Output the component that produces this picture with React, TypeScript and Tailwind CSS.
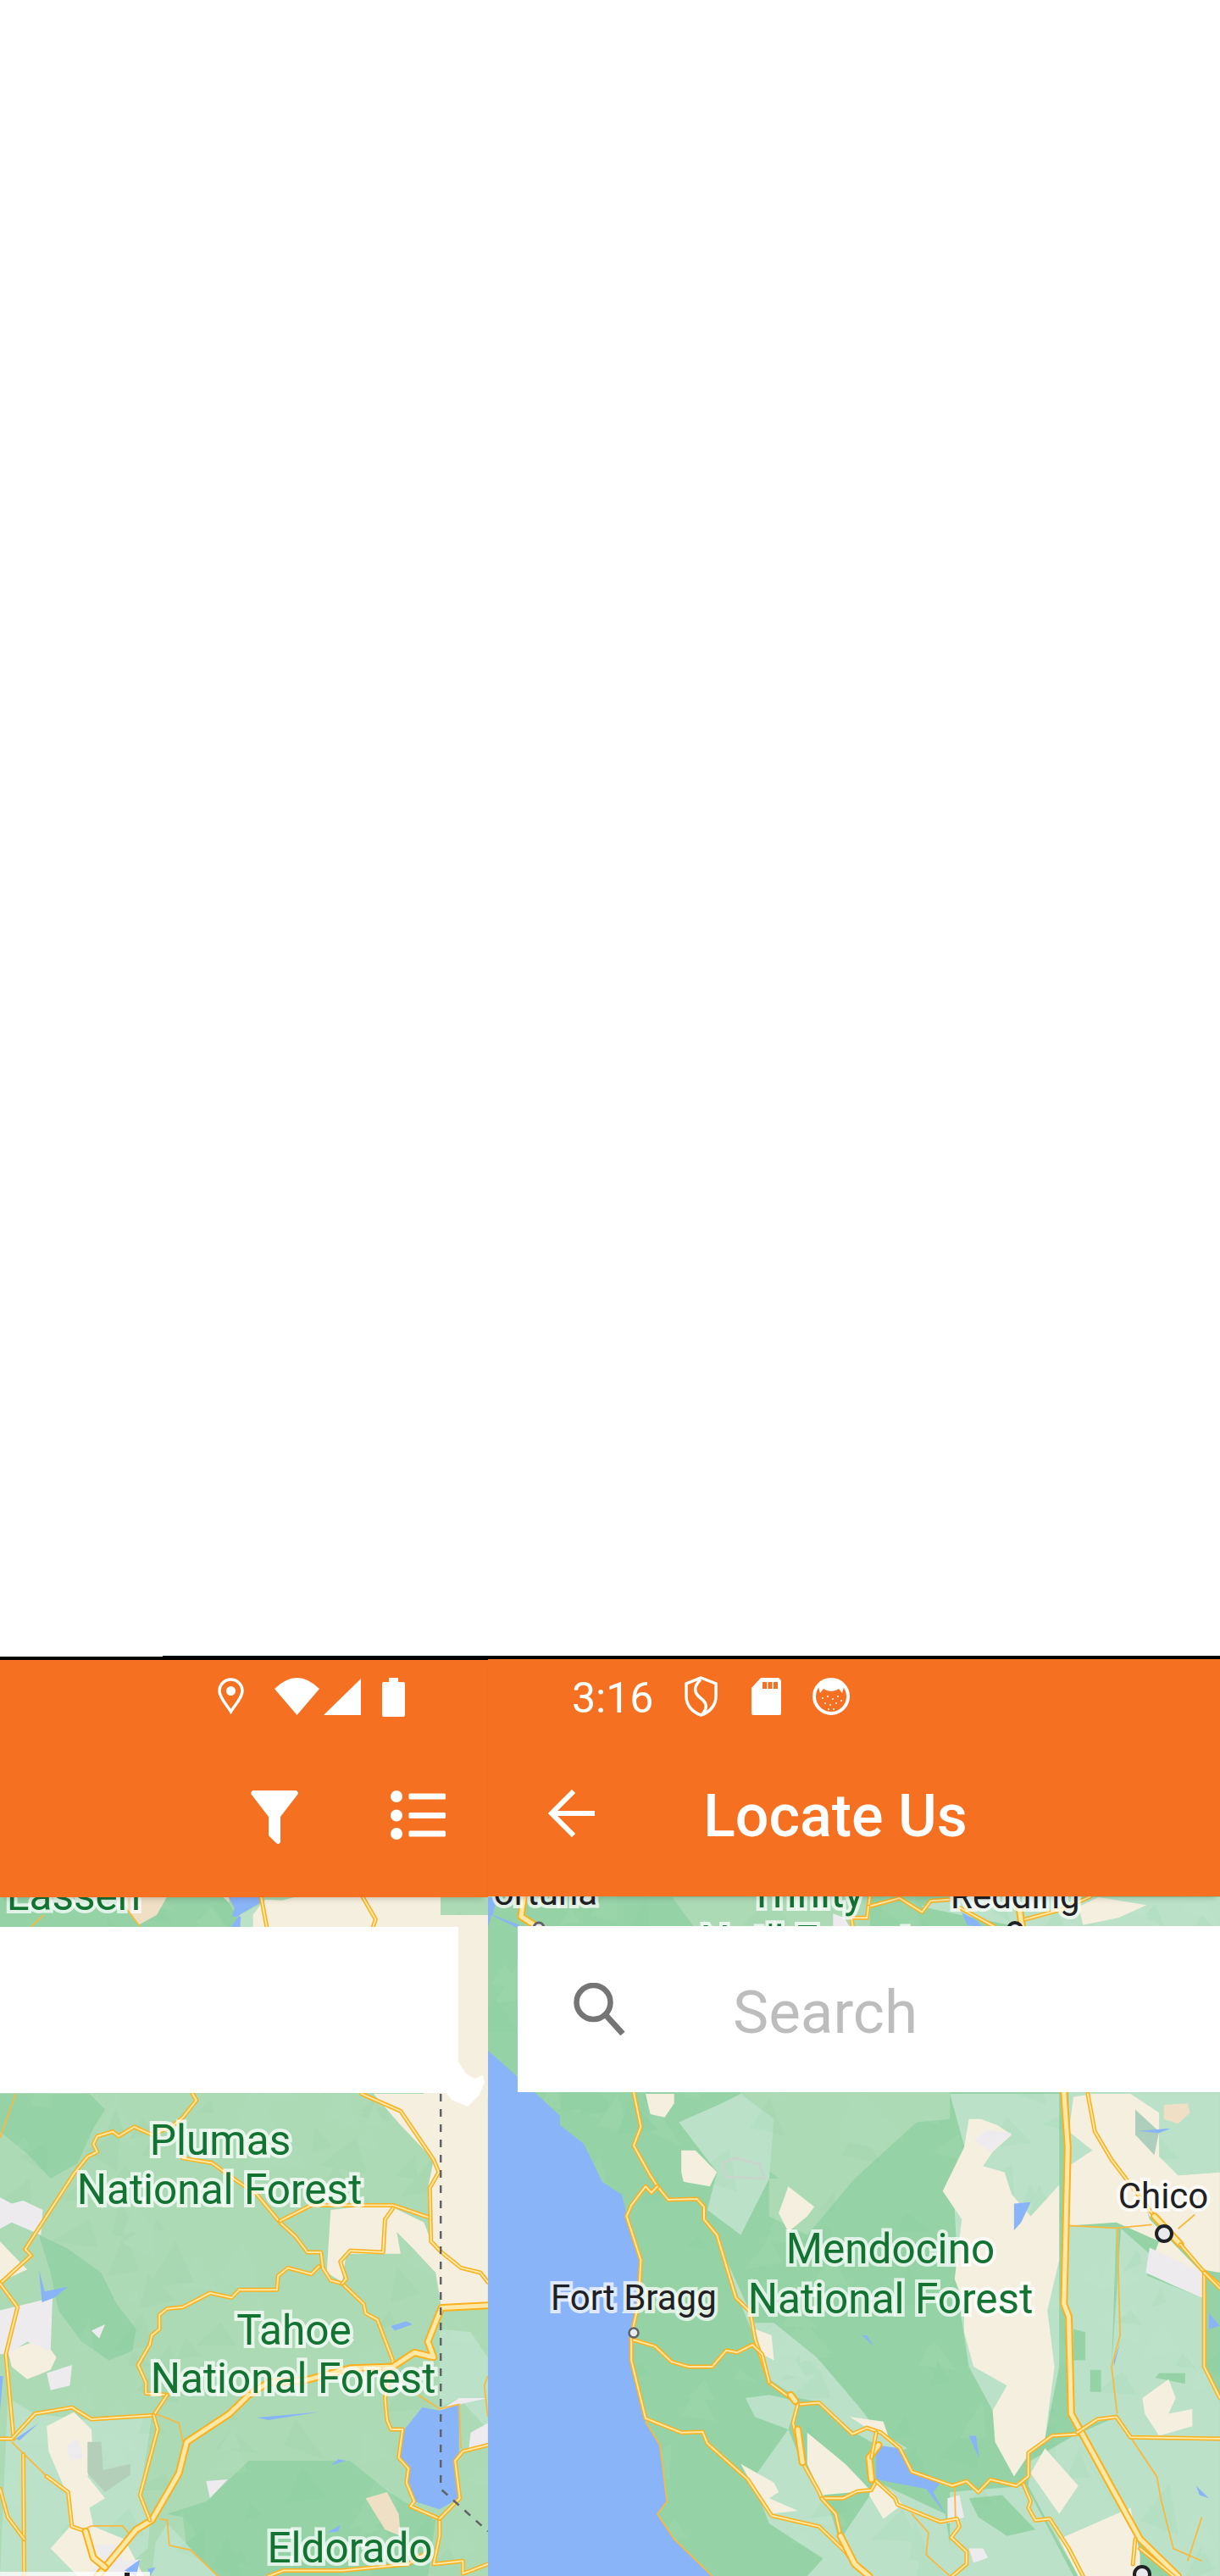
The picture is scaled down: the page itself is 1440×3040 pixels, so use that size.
import React from 'react';

// the reference crops were read at different scales, so map shapes are noted in crop coordinates
const conv = (ox: number, oy: number, sx: number, sy: number) => (flat: number[]) => {
  const out: string[] = [];
  for (let i = 0; i < flat.length; i += 2) out.push(`${(ox + flat[i] / sx).toFixed(1)},${(oy + flat[i + 1] / sy).toFixed(1)}`);
  return out.join(' ');
};
const L = conv(0, 2460, 2.178, 2.703);
const R = conv(560, 2460, 1.782, 2.703);
const T = conv(0, 2230, 3, 3);
const B = conv(0, 2960, 3, 3);
const TR = conv(920, 2230, 3, 3);
const TM = conv(500, 2230, 3, 3);

const DARK = '#95D3A6';
const MID = '#ACDAB5';
const LIGHT = '#BBE2C8';
const CREAM = '#F5EFDF';
const WATER = '#8AB4F8';
const GRAY = '#EEEBEF';
const PEACH = '#EFDFC4';

const Facets: React.FC<{ x: number; y: number; w: number; h: number; seed: number }> = ({ x, y, w, h, seed }) => {
  let s = seed;
  const rnd = () => {
    s = (s * 16807) % 2147483647;
    return s / 2147483647;
  };
  const items = Array.from({ length: 170 }, () => {
    const cx = x + rnd() * w;
    const cy = y + rnd() * h;
    const size = 10 + rnd() * 24;
    const pts = [0, 1, 2].map((i) => {
      const a = i * 2.1 + rnd() * 1.2;
      return `${(cx + Math.cos(a) * size).toFixed(1)},${(cy + Math.sin(a) * size).toFixed(1)}`;
    });
    return { pts: pts.join(' '), fill: rnd() > 0.5 ? '#7CC797' : '#CBE9D4' };
  });
  return (
    <g opacity={0.09}>
      {items.map((f, i) => (
        <polygon key={i} points={f.pts} fill={f.fill} />
      ))}
    </g>
  );
};

const Road: React.FC<{ d: string; thick?: boolean }> = ({ d, thick }) => (
  <g fill="none" strokeLinejoin="round" strokeLinecap="round">
    <polyline points={d} stroke="#FBB01E" strokeWidth={thick ? 9 : 5} />
    <polyline points={d} stroke="#FEE8A6" strokeWidth={thick ? 5 : 2} />
  </g>
);

const Thin: React.FC<{ d: string }> = ({ d }) => (
  <polyline points={d} fill="none" stroke="#F9B93F" strokeWidth={1.8} />
);

const Label: React.FC<{ x: number; y: number; size?: number; dark?: boolean; anchor?: 'start' | 'middle' | 'end'; children: React.ReactNode }> = ({
  x,
  y,
  size = 49.5,
  dark,
  anchor = 'middle',
  children,
}) => (
  <text
    x={x}
    y={y}
    textAnchor={anchor}
    fontSize={size}
    fill={dark ? '#202124' : '#137333'}
    stroke="#FFFFFF"
    strokeOpacity={0.72}
    strokeWidth={8}
    strokeLinejoin="miter"
    className="[paint-order:stroke] font-[family-name:Roboto,sans-serif]"
  >
    {children}
  </text>
);

const LeftMap = () => (
  <svg viewBox="0 2239 576 801" className="block h-full w-full" preserveAspectRatio="none">
    <rect x="0" y="2239" width="576" height="801" fill={MID} />
    <polygon points={T([0, 27, 800, 27, 860, 135, 0, 135])} fill={DARK} />
    <polygon points={L([0, 30, 230, 30, 270, 80, 240, 140, 200, 250, 130, 300, 70, 220, 0, 150])} fill={DARK} />
    <polygon points={L([100, 480, 170, 520, 260, 600, 300, 700, 350, 780, 340, 850, 280, 880, 210, 820, 150, 720, 130, 600])} fill={DARK} />
    <polygon points={L([430, 1370, 530, 1330, 640, 1200, 900, 1200, 1000, 1300, 1120, 1390, 1100, 1568, 560, 1568, 480, 1480, 470, 1380])} fill={DARK} />
    <polygon points={L([20, 1000, 90, 1050, 230, 1070, 390, 1060, 360, 1310, 385, 1400, 380, 1480, 300, 1568, 0, 1568])} fill={LIGHT} />
    <polygon points={L([430, 1400, 490, 1480, 560, 1568, 390, 1568, 400, 1460])} fill={LIGHT} />
    <polygon points={L([1130, 780, 1210, 790, 1254, 870, 1254, 1100, 1180, 1000, 1130, 1030])} fill={LIGHT} />
    <Facets x={0} y={2239} w={576} h={801} seed={4711} />

    <polygon points={L([960, 30, 1254, 30, 1254, 700, 1135, 712, 1120, 600, 1060, 520, 1020, 470, 1030, 540, 890, 540, 880, 630, 840, 600, 850, 400, 990, 380, 1090, 440, 1108, 500, 1100, 330, 1115, 240, 1030, 130])} fill={CREAM} />
    <polygon points={T([895, 135, 895, 90, 925, 50, 940, 35, 1000, 38, 1040, 27, 1560, 27, 1560, 140])} fill={CREAM} />
    <rect x="500" y="2260" width="76" height="215" fill={CREAM} />
    <polygon points={T([925, 50, 850, 90, 850, 135, 895, 135, 895, 90])} fill={LIGHT} />
    <polygon points={T([430, 27, 590, 27, 555, 90, 490, 125, 450, 70])} fill={PEACH} />
    <polygon points={T([790, 27, 810, 27, 812, 47])} fill={PEACH} />
    <polygon points={L([0, 500, 30, 540, 70, 590, 0, 630])} fill={CREAM} />
    <polygon points={L([20, 850, 110, 810, 145, 870, 130, 910, 70, 940, 30, 900])} fill={CREAM} />
    <polygon points={L([120, 1090, 190, 1045, 235, 1100, 240, 1210, 225, 1250, 270, 1320, 230, 1350, 240, 1410, 320, 1450, 370, 1568, 200, 1568, 130, 1480, 180, 1410, 170, 1300, 125, 1170])} fill={CREAM} />
    <polygon points={L([940, 1320, 995, 1300, 1025, 1370, 1030, 1440, 990, 1420])} fill={PEACH} />

    <polygon points={L([0, 360, 30, 380, 60, 370, 110, 400, 105, 480, 30, 440, 0, 460])} fill={GRAY} />
    <polygon points={L([0, 720, 135, 680, 130, 850, 70, 820, 20, 860, 0, 860])} fill={GRAY} />
    <polygon points={L([235, 785, 270, 765, 255, 810])} fill={GRAY} />
    <polygon points={L([120, 920, 185, 895, 180, 960, 130, 975])} fill={GRAY} />
    <polygon points={L([530, 1265, 585, 1260, 540, 1320])} fill={GRAY} />
    <polygon points={L([1254, 1080, 1210, 1110, 1205, 1160, 1254, 1150])} fill={GRAY} />
    <polygon points={L([1130, 1040, 1180, 1000, 1254, 1000, 1180, 1020])} fill={GRAY} />
    <polygon points={L([170, 1150, 200, 1130, 215, 1190, 180, 1200])} fill={GRAY} />
    <polygon points={B([330, 130, 430, 130, 435, 190, 500, 180, 440, 240, 290, 240, 370, 190])} fill={GRAY} />
    <polygon points={L([225, 1140, 260, 1140, 265, 1230, 335, 1210, 335, 1245, 270, 1300, 225, 1240])} fill="#B3CFB9" />

    <polygon points={L([1040, 1100, 1085, 1030, 1130, 1040, 1180, 1020, 1180, 1190, 1170, 1200, 1180, 1320, 1130, 1355, 1065, 1330, 1045, 1270, 1050, 1225, 1025, 1190])} fill={WATER} />
    <polygon points={L([100, 590, 115, 660, 175, 645, 140, 680, 108, 695])} fill={WATER} />
    <polygon points={L([1005, 770, 1045, 755, 1060, 765, 1015, 785])} fill={WATER} />
    <polygon points={L([660, 1062, 820, 1045, 690, 1070])} fill={WATER} />
    <polygon points={L([850, 1215, 870, 1195, 890, 1200])} fill={WATER} />
    <polygon points={L([40, 1130, 100, 1080, 50, 1135])} fill={WATER} />
    <polygon points={L([840, 1430, 875, 1405, 870, 1425])} fill={WATER} />
    <polygon points={L([0, 930, 8, 930, 0, 1040])} fill={WATER} />
    <polygon points={L([320, 1550, 360, 1515, 350, 1568])} fill={WATER} />
    <polygon points={L([380, 1545, 400, 1540, 385, 1568])} fill={WATER} />
    <polygon points={T([810, 27, 925, 27, 925, 45, 850, 88, 815, 135, 850, 135, 853, 95, 822, 95, 830, 65])} fill={WATER} />

    <Thin d={L([40, 30, 0, 170])} />
    <Thin d={T([155, 90, 110, 130])} />
    <Thin d={T([450, 70, 495, 130])} />
    <Thin d={L([400, 1050, 460, 1080, 470, 1140])} />
    <Thin d={L([1075, 990, 1130, 1035, 1180, 1020, 1185, 1160])} />
    <Thin d={L([410, 1385, 430, 1390, 435, 1470, 490, 1485, 560, 1568])} />
    <Thin d={L([215, 1420, 235, 1408, 315, 1408, 330, 1430, 355, 1425])} />
    <Thin d={L([1254, 930, 1245, 960, 1254, 1060])} />
    <Thin d={L([30, 1140, 120, 1250])} />
    <Road d={T([925, 27, 945, 135])} />
    <Road d={T([1285, 27, 1330, 105, 1320, 135])} />
    <Road d={L([495, 30, 505, 50, 470, 105, 440, 135, 390, 160, 345, 135, 305, 165, 290, 150, 250, 165, 240, 190, 250, 215, 225, 230, 190, 285, 65, 525, 80, 545, 0, 635])} />
    <Road d={L([0, 635, 45, 710, 15, 860, 35, 1130])} />
    <Road d={L([470, 235, 545, 250, 600, 300, 660, 350, 720, 440, 760, 485, 790, 535, 825, 535, 830, 585, 850, 625, 880, 635, 935, 700, 940, 730, 970, 750, 1010, 880, 990, 1000, 995, 1070, 1005, 1100, 1035, 1100, 1025, 1190, 1050, 1225, 1045, 1270, 1065, 1330, 1055, 1345, 1130, 1385, 1130, 1440, 1115, 1530, 1190, 1520, 1190, 1560, 1254, 1530])} />
    <Road d={L([720, 435, 800, 385, 1010, 385, 1105, 425])} />
    <Road d={L([930, 30, 1030, 85, 1115, 240, 1128, 280, 1105, 330, 1108, 500, 1135, 535, 1185, 585, 1235, 600, 1254, 630])} />
    <Road d={L([1010, 395, 990, 430, 985, 535, 900, 530, 875, 565, 890, 620, 880, 635])} />
    <Road d={L([820, 580, 800, 605, 740, 585, 715, 610, 712, 655, 615, 655, 595, 680, 540, 665, 470, 710, 430, 715, 410, 735, 410, 780, 390, 800, 385, 830, 355, 895, 375, 950, 375, 985, 430, 990])} />
    <Road thick d={L([1254, 705, 1135, 712, 1100, 820, 1115, 870, 1065, 855, 1010, 900, 900, 905, 780, 945, 690, 950, 640, 990])} />
    <Road thick d={L([640, 990, 590, 1050, 480, 1140, 460, 1240, 390, 1390, 350, 1420, 270, 1540, 250, 1568])} />
    <Road d={L([430, 990, 395, 1055, 235, 1068, 185, 1030, 90, 1050, 30, 1130, 0, 1130])} />
    <Road d={L([395, 1055, 405, 1100, 360, 1310, 385, 1390])} />
    <Road d={L([120, 1250, 175, 1300, 185, 1410, 220, 1425])} />
    <Road thick d={L([220, 1425, 240, 1510, 270, 1540])} />
    <Road d={L([60, 1180, 62, 1568])} />
    <Road d={L([0, 1290, 20, 1380, 62, 1450])} />
    <Road d={L([1254, 1150, 1190, 1170, 1170, 1200, 1182, 1320, 1130, 1385])} />
    <Road d={L([690, 1568, 730, 1550, 880, 1550, 1050, 1530, 1100, 1490])} />

    <polyline points={L([1133, 30, 1133, 1290, 1254, 1425])} fill="none" stroke="#5F6368" strokeWidth={2.5} strokeDasharray="9 9" />
    <polygon points="541,2433 550,2447 560,2453 570,2449 572,2458 565,2473 552,2486 533,2478 527,2470 541,2440" fill="#FFFFFF" />

    <rect x="0" y="3035" width="177" height="5" fill="#FFFFFF" fillOpacity={0.75} />
    <rect x="147" y="3036" width="6" height="4" fill="#202124" />

    <Label x={87} y={2254}>Lassen</Label>
    <Label x={260} y={2543}>Plumas</Label>
    <Label x={259} y={2601}>National Forest</Label>
    <Label x={347} y={2767}>Tahoe</Label>
    <Label x={346} y={2824}>National Forest</Label>
    <Label x={413} y={3024}>Eldorado</Label>
  </svg>
);

const RightMap = () => (
  <svg viewBox="576 2238 864 802" className="block h-full w-full" preserveAspectRatio="none">
    <rect x="576" y="2238" width="864" height="802" fill={DARK} />
    <polygon points={TM([880, 27, 1560, 27, 1560, 135, 960, 135])} fill={MID} />
    <polygon points={TR([0, 27, 320, 27, 320, 135, 0, 135])} fill={MID} />
    <polygon points={TR([500, 60, 600, 27, 1560, 27, 1560, 135, 860, 135])} fill={LIGHT} />
    <polygon points={R([560, 25, 1000, 25, 1000, 110, 930, 120, 800, 300, 640, 300, 520, 150])} fill={MID} />
    <polygon points={R([430, 120, 520, 60, 560, 30, 630, 110, 620, 300, 560, 480, 490, 400, 510, 280])} fill={LIGHT} />
    <polygon points={R([620, 300, 800, 300, 700, 480, 620, 420])} fill={MID} />
    <polygon points={R([630, 760, 720, 870, 810, 1030, 845, 1100, 910, 1160, 880, 1180, 800, 1110, 720, 1010, 680, 1000, 620, 940, 590, 810])} fill={LIGHT} />
    <polygon points={R([530, 560, 590, 760, 630, 760, 590, 810, 560, 700])} fill={LIGHT} />
    <polygon points={R([1040, 250, 1230, 250, 1230, 900, 1200, 1130, 1100, 1130, 1090, 1040, 1040, 900, 1020, 700, 1010, 400])} fill={LIGHT} />
    <polygon points={R([1000, 30, 1230, 30, 1230, 260, 1040, 250])} fill={LIGHT} />
    <polygon points={R([1250, 25, 1568, 25, 1568, 280, 1480, 290, 1250, 450])} fill={LIGHT} />
    <polygon points={R([1250, 450, 1350, 460, 1340, 900, 1350, 1060, 1280, 1090, 1260, 1060, 1240, 710])} fill={LIGHT} />
    <polygon points={R([1360, 460, 1420, 540, 1415, 610, 1530, 680, 1530, 900, 1568, 1000, 1568, 1568, 1480, 1568, 1390, 1450, 1260, 1120, 1350, 1060, 1340, 900])} fill={LIGHT} />
    <polygon points={R([1170, 1200, 1260, 1120, 1390, 1450, 1390, 1568, 1270, 1568, 1200, 1380, 1165, 1280])} fill={LIGHT} />
    <polygon points={R([570, 1000, 620, 990, 680, 1010, 660, 1100, 690, 1210, 740, 1320, 790, 1568, 620, 1400, 585, 1260, 660, 1100, 590, 1060])} fill={LIGHT} />
    <polygon points={R([850, 1270, 990, 1370, 1010, 1568, 700, 1568, 770, 1450])} fill={LIGHT} />
    <polygon points={R([1000, 1300, 1160, 1280, 1260, 1568, 1000, 1568])} fill={LIGHT} />
    <polygon points={R([1040, 1320, 1110, 1310, 1180, 1420, 1120, 1440, 1060, 1380])} fill={DARK} />
    <polygon points={R([1260, 780, 1285, 790, 1285, 880, 1260, 880])} fill={DARK} />
    <polygon points={R([1295, 910, 1318, 910, 1318, 980, 1295, 980])} fill={DARK} />
    <polygon points={R([1440, 920, 1495, 920, 1495, 955, 1432, 935])} fill={DARK} />
    <Facets x={576} y={2238} w={864} h={802} seed={90210} />

    <polygon points={R([1040, 110, 1065, 110, 1100, 130, 1130, 160, 1090, 215, 1070, 260, 1115, 280, 1130, 350, 1170, 420, 1230, 320, 1230, 560, 1205, 720, 1220, 900, 1200, 1130, 1170, 1170, 1135, 1250, 1095, 1140, 1090, 1040, 1120, 960, 1050, 900, 1030, 790, 1030, 700, 1010, 620, 1025, 430, 985, 340, 1030, 200])} fill={CREAM} />
    <polygon points={R([1260, 40, 1300, 30, 1340, 130, 1390, 280, 1420, 430, 1530, 600, 1530, 680, 1470, 640, 1415, 600, 1440, 500, 1350, 440, 1250, 450, 1250, 260, 1300, 210, 1250, 150])} fill={CREAM} />
    <polygon points={R([1300, 30, 1380, 30, 1440, 90, 1440, 230, 1480, 290, 1568, 280, 1568, 600, 1530, 590, 1420, 420])} fill={CREAM} />
    <polygon points={R([1405, 1000, 1460, 940, 1475, 1000, 1460, 1050, 1510, 1035, 1510, 1090, 1440, 1120, 1410, 1050])} fill={CREAM} />
    <polygon points={R([360, 30, 420, 30, 420, 60, 400, 105, 370, 95])} fill={CREAM} />
    <polygon points={R([435, 210, 465, 210, 510, 280, 495, 325, 440, 310, 435, 280])} fill={CREAM} />
    <polygon points={R([660, 325, 715, 390, 700, 420, 660, 470, 640, 410])} fill={CREAM} />
    <polygon points={R([700, 1110, 780, 1210, 830, 1290, 800, 1300, 730, 1310, 700, 1210])} fill={CREAM} />
    <polygon points={R([560, 1210, 630, 1270, 640, 1300, 620, 1320, 680, 1360, 620, 1370, 585, 1280])} fill={CREAM} />
    <polygon points={R([840, 1270, 880, 1300, 900, 1340, 860, 1385, 830, 1310])} fill={CREAM} />
    <polygon points={R([790, 1060, 860, 1075, 870, 1120, 820, 1090])} fill={CREAM} />
    <polygon points={R([1200, 1160, 1270, 1280, 1230, 1370, 1170, 1240])} fill={CREAM} />
    <polygon points={R([1230, 1450, 1380, 1350, 1400, 1500, 1400, 1568, 1270, 1568])} fill={CREAM} />
    <polygon points={R([590, 780, 625, 800, 630, 880, 605, 860])} fill={CREAM} />
    <polygon points={TR([1075, 125, 1060, 60, 1130, 27, 1300, 55, 1200, 100])} fill={CREAM} />
    <polygon points={R([1450, 65, 1500, 60, 1505, 90, 1480, 125, 1450, 110])} fill={PEACH} />
    <polygon points={R([1390, 80, 1440, 150, 1430, 225, 1390, 160])} fill="#AECFBB" />

    <polygon points={R([1050, 175, 1080, 145, 1130, 155, 1085, 215])} fill={GRAY} />
    <polygon points={R([1412, 600, 1420, 520, 1530, 600, 1530, 680, 1470, 640])} fill={GRAY} />
    <polygon points={R([995, 1320, 1020, 1310, 1030, 1380, 995, 1400])} fill={GRAY} />
    <polygon points={R([1040, 1480, 1070, 1480, 1080, 1510, 1050, 1525])} fill={GRAY} />
    <polygon points={TR([190, 85, 230, 100, 250, 135, 190, 135])} fill={GRAY} />
    <polyline points={R([520, 250, 550, 235, 600, 255, 610, 300, 530, 295, 520, 250])} fill="none" stroke="#C8D5CB" strokeWidth={3} />

    <polygon points="576,2420 611,2451 633,2471 661,2497 661,2508 689,2530 711,2575 734,2590 740,2615 756,2667 754,2719 745,2756 745,2785 759,2852 779,2885 787,2952 776,2967 796,2996 840,3040 576,3040" fill={WATER} />
    <polygon points={TM([228, 27, 260, 27, 245, 90, 340, 125, 330, 135, 240, 90, 228, 135])} fill={WATER} />
    <polygon points={R([845, 1150, 895, 1160, 920, 1240, 980, 1270, 965, 1300, 990, 1370, 950, 1290, 845, 1260])} fill={WATER} />
    <polygon points={R([1135, 380, 1170, 375, 1150, 440, 1135, 465])} fill={WATER} />
    <polygon points={R([815, 800, 825, 800, 840, 835])} fill={WATER} />
    <polygon points={R([1040, 1120, 1055, 1120, 1062, 1195])} fill={WATER} />
    <polygon points={R([1395, 148, 1465, 140, 1440, 155])} fill={WATER} />
    <polygon points={R([1545, 730, 1568, 770, 1545, 780])} fill={WATER} />
    <polygon points={R([1358, 825, 1345, 900, 1345, 880])} fill={WATER} />
    <polygon points={R([1518, 1280, 1545, 1320, 1525, 1310])} fill={WATER} />
    <polygon points={TR([645, 80, 700, 110, 720, 135, 665, 125])} fill={WATER} />

    <Thin d={R([1250, 450, 1350, 458, 1425, 447])} />
    <Thin d={R([1352, 460, 1358, 800, 1340, 900, 1352, 1050])} />
    <Thin d={R([1480, 460, 1515, 415])} />
    <Thin d={R([1380, 1125, 1435, 1250, 1445, 1330, 1470, 1480, 1530, 1520])} />
    <Thin d={R([1530, 1380, 1500, 1520])} />
    <Thin d={R([1010, 1280, 1012, 1390])} />
    <Thin d={R([920, 1370, 955, 1430, 950, 1500, 1000, 1568])} />
    <Thin d={R([360, 1075, 390, 1150, 405, 1330, 385, 1370, 420, 1450, 500, 1568])} />

    <Road d={R([335, 25, 350, 135, 335, 195, 370, 290, 385, 325, 408, 368, 468, 365, 483, 390, 483, 430, 510, 480, 550, 680, 580, 725, 590, 810, 620, 950, 665, 1000, 680, 1020, 725, 1015, 795, 1115, 825, 1095, 855, 1110, 895, 1160, 920, 1235, 1005, 1280, 1035, 1265, 1060, 1300, 1085, 1260, 1140, 1280, 1165, 1250, 1165, 1175, 1215, 1120, 1268, 1115])} />
    <Road d={R([385, 325, 372, 345, 360, 325, 330, 385, 320, 420, 350, 560, 345, 700, 330, 800, 330, 880, 360, 1065, 435, 1110, 480, 1108, 490, 1145, 575, 1260, 625, 1375, 725, 1410, 780, 1490, 800, 1530, 830, 1568])} />
    <Road d={R([335, 815, 380, 835, 415, 885, 450, 900, 500, 900, 530, 848, 552, 855, 585, 830, 605, 860, 620, 950])} />
    <Road thick d={R([1240, 25, 1248, 200, 1240, 700, 1250, 740, 1255, 1050, 1400, 1450, 1480, 1568])} />
    <Road d={R([1290, 30, 1305, 150, 1340, 240, 1430, 420])} />
    <Road thick d={R([1430, 420, 1485, 510])} />
    <Road d={R([1485, 510, 1530, 590, 1568, 640])} />
    <Road d={R([1268, 1110, 1310, 1068, 1350, 1060, 1380, 1125, 1568, 1130])} />
    <Road d={R([665, 990, 680, 1020, 670, 1080, 690, 1205, 725, 1300, 730, 1320, 775, 1320, 805, 1298, 835, 1293, 845, 1265])} />
    <Road thick d={R([665, 990, 675, 1010])} />
    <Road thick d={R([850, 1150, 830, 1190, 835, 1260])} />
    <Road thick d={R([680, 1100, 690, 1205])} />
    <Road d={R([845, 1110, 835, 1190])} />
    <Road d={R([845, 1265, 885, 1320, 890, 1340, 980, 1395, 1015, 1385, 1020, 1410, 1003, 1445, 1035, 1490, 1035, 1530, 1005, 1568])} />
    <Road d={R([730, 1320, 760, 1370, 770, 1440])} />
    <Road thick d={R([770, 1440, 800, 1530, 830, 1568])} />
    <Road d={R([1155, 1275, 1170, 1330, 1165, 1350, 1180, 1390, 1210, 1385, 1250, 1480, 1280, 1568])} />
    <Road d={R([1535, 600, 1535, 900, 1568, 1000])} />
    <Road d={R([1535, 600, 1568, 650])} />
    <Road d={R([1390, 1450, 1385, 1530])} />
    <Road d={R([1400, 1480, 1470, 1568])} />
    <Road thick d={TM([355, 27, 345, 95, 400, 130])} />
    <Road d={TR([320, 27, 315, 60, 425, 30, 505, 80, 535, 40, 600, 35])} />
    <Road d={TR([315, 60, 310, 100, 255, 100, 260, 135])} />
    <Road d={TR([640, 65, 760, 130])} />
    <Road thick d={TR([850, 70, 860, 135])} />
    <Road d={TR([870, 105, 1000, 70, 1100, 25])} />

    <circle cx="636" cy="2275" r="6" fill="#E8EAED" stroke="#5F6368" strokeWidth={3} />
    <circle cx="1198" cy="2277" r="8" fill="#E8EAED" stroke="#202124" strokeWidth={4} />
    <circle cx="748" cy="2753" r="5.5" fill="#E8EAED" stroke="#5F6368" strokeWidth={2.5} />
    <circle cx="1374" cy="2636" r="9" fill="#E8EAED" stroke="#202124" strokeWidth={4} />
    <circle cx="1348" cy="3038" r="9" fill="#E8EAED" stroke="#202124" strokeWidth={4} />

    <Label dark x={705} y={2248} size={42} anchor="end">Fortuna</Label>
    <Label x={952} y={2251}>Trinity</Label>
    <Label x={952} y={2308}>Nat'l Forest</Label>
    <Label dark x={1122} y={2252} size={42} anchor="start">Redding</Label>
    <Label dark x={650} y={2726} size={42} anchor="start">Fort Bragg</Label>
    <Label dark x={1373} y={2606} size={42}>Chico</Label>
    <Label x={1051} y={2671}>Mendocino</Label>
    <Label x={1051} y={2730}>National Forest</Label>
  </svg>
);

const PinIcon = () => (
  <svg width="31" height="43" viewBox="0 0 31 43" className="shrink-0">
    <path d="M15.5 40 C11 32 2 24 2 15.5 A13.5 13.5 0 0 1 29 15.5 C29 24 20 32 15.5 40Z" fill="none" stroke="#fff" strokeWidth="3.5" />
    <circle cx="15.5" cy="15.5" r="5.5" fill="#fff" />
  </svg>
);

const WifiIcon = () => (
  <svg width="53" height="44" viewBox="0 0 53 44" className="shrink-0">
    <path d="M0 13 Q26.5 -13 53 13 L26.5 44Z" fill="#fff" />
  </svg>
);

const SignalIcon = () => (
  <svg width="44" height="44" viewBox="0 0 44 44" className="shrink-0">
    <path d="M44 1V44H0Z" fill="#fff" />
  </svg>
);

const BatteryIcon = () => (
  <svg width="27" height="46" viewBox="0 0 27 46" className="shrink-0">
    <path d="M8 0H19V5H25A2 2 0 0 1 27 7V44A2 2 0 0 1 25 46H2A2 2 0 0 1 0 44V7A2 2 0 0 1 2 5H8Z" fill="#fff" />
  </svg>
);

const ShieldIcon = () => (
  <svg width="39" height="48" viewBox="0 0 39 48" className="shrink-0" fill="none" stroke="#fff" strokeWidth="3.5">
    <path d="M19.5 2 L37 9 V24 C37 35 29 43 19.5 46 C10 43 2 35 2 24 V9Z" />
    <path d="M19 4 C10 13 11 20 19 26 C27 32 27 38 21 45" />
  </svg>
);

const SdIcon = () => (
  <svg width="35" height="44" viewBox="0 0 35 44" className="shrink-0">
    <path d="M11 0H32L35 3V42A2 2 0 0 1 33 44H2A2 2 0 0 1 0 42V12Z" fill="#fff" />
    <rect x="13" y="5" width="5" height="8" fill="#F57021" />
    <rect x="19.5" y="5" width="5" height="8" fill="#F57021" />
    <rect x="26" y="5" width="5" height="8" fill="#F57021" />
  </svg>
);

const CatIcon = () => (
  <svg width="44" height="44" viewBox="0 0 44 44" className="shrink-0">
    <circle cx="22" cy="22" r="20" fill="none" stroke="#fff" strokeWidth="4" />
    <path d="M7 11 Q22 -5 37 11 L35 18 L31 13 Q22 19 13 13 L9 18Z" fill="#fff" />
    {[[12, 24], [18, 22], [24, 25], [30, 22], [34, 27], [15, 30], [21, 32], [28, 30], [19, 37], [25, 37]].map(([x, y], i) => (
      <circle key={i} cx={x} cy={y} r="1" fill="#fff" />
    ))}
  </svg>
);

const FilterIcon = () => (
  <svg width="56" height="63" viewBox="0 0 56 63" className="shrink-0">
    <path d="M3 0H53A3 3 0 0 1 55 5L35 31V59A3 3 0 0 1 30 62L21 53V31L1 5A3 3 0 0 1 3 0Z" fill="#fff" />
  </svg>
);

const ListIcon = () => (
  <svg width="65" height="58" viewBox="0 0 65 58" className="shrink-0" fill="#fff">
    <circle cx="7" cy="7" r="7" />
    <circle cx="7" cy="29.5" r="7" />
    <circle cx="7" cy="51" r="7" />
    <rect x="21.5" y="3.5" width="43.5" height="7" rx="1.5" />
    <rect x="21.5" y="26" width="43.5" height="7" rx="1.5" />
    <rect x="21.5" y="47.5" width="43.5" height="7" rx="1.5" />
  </svg>
);

const BackIcon = () => (
  <svg width="55" height="56" viewBox="0 0 55 56" className="shrink-0" fill="none" stroke="#fff" strokeWidth="6">
    <path d="M55 28H5" />
    <path d="M30 2L4 28L30 54" />
  </svg>
);

const SearchIcon = () => (
  <svg width="61" height="62" viewBox="0 0 61 62" className="shrink-0" fill="none" stroke="#757575">
    <circle cx="23.5" cy="23" r="20" strokeWidth="6.5" />
    <path d="M38 38L58 60" strokeWidth="7" />
  </svg>
);

const App: React.FC = () => {
  return (
    <div className="h-[3040px] w-[1440px] overflow-hidden bg-white font-[family-name:Roboto,sans-serif]">
      <div className="h-[1954px] bg-white" />
      <div className="flex h-[1086px]">
        {/* left screen */}
        <div className="flex w-[576px] flex-col">
          <div className="flex items-end">
            <div className="h-[4px] w-[192px] bg-black" />
            <div className="h-[5px] flex-1 bg-black" />
          </div>
          <header className="relative z-10 h-[280px] bg-[#F57021] shadow-[0_7px_7px_-5px_rgba(0,0,0,0.18)]">
            <div className="flex h-[88px] items-start pl-[257px] pt-[21px]">
              <PinIcon />
              <div className="ml-[36px]"><WifiIcon /></div>
              <div className="ml-[5px]"><SignalIcon /></div>
              <div className="ml-[25px]"><BatteryIcon /></div>
            </div>
            <div className="flex items-start gap-[109px] pl-[296px] pt-[66px]">
              <FilterIcon />
              <ListIcon />
            </div>
          </header>
          <div className="relative flex-1 overflow-hidden">
            <LeftMap />
            <div className="absolute left-0 top-[35px] h-[196px] w-[541px] bg-white" />
          </div>
        </div>

        {/* right screen */}
        <div className="flex flex-1 flex-col">
          <div className="h-[4px] bg-black" />
          <header className="relative z-10 h-[280px] bg-[#F57021] shadow-[0_7px_7px_-5px_rgba(0,0,0,0.18)]">
            <div className="flex h-[88px] items-start pl-[99px] pt-[21px] text-white">
              <span className="w-[93px] text-[50px] font-normal leading-none">3:16</span>
              <div className="-mt-[1px] ml-[40px]"><ShieldIcon /></div>
              <div className="ml-[40px] mt-[1px]"><SdIcon /></div>
              <div className="ml-[37px] mt-[1px]"><CatIcon /></div>
            </div>
            <div className="flex items-start pl-[71px] pt-[66px] text-white">
              <BackIcon />
              <h1 className="-mt-[4px] ml-[128px] text-[70px] font-medium leading-none">Locate Us</h1>
            </div>
          </header>
          <div className="relative flex-1 overflow-hidden">
            <RightMap />
            <div className="absolute left-[35px] right-0 top-[35px] flex h-[196px] items-center bg-white pl-[66px]">
              <SearchIcon />
              <span className="ml-[127px] pt-[6px] text-[71px] leading-none text-[#BDBDBD]">Search</span>
            </div>
          </div>
        </div>
      </div>
    </div>
  );
};

export default App;
